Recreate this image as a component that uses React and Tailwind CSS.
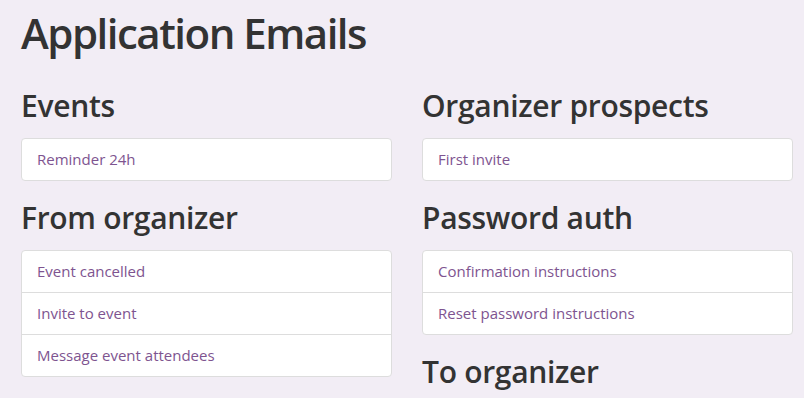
import React from 'react';

const sections = {
  left: [
    { title: 'Events', items: ['Reminder 24h'] },
    { title: 'From organizer', items: ['Event cancelled', 'Invite to event', 'Message event attendees'] },
  ],
  right: [
    { title: 'Organizer prospects', items: ['First invite'] },
    { title: 'Password auth', items: ['Confirmation instructions', 'Reset password instructions'] },
    { title: 'To organizer', items: ['New event'] },
  ],
};

function Section({ title, items }) {
  return (
    <div className="mb-[19px]">
      <h2 className="font-['Open_Sans',sans-serif] text-[30px] font-semibold leading-[36px] tracking-[-0.3px] text-[#333333] mb-[14px]">{title}</h2>
      <div className="rounded-[4px] border border-[#dddddd] bg-white divide-y divide-[#dddddd]">
        {items.map((item) => (
          <a key={item} href="#" className="block px-[15px] py-[10px] text-[15px] leading-[21px] text-[#7e5490]">
            {item}
          </a>
        ))}
      </div>
    </div>
  );
}

export default function App() {
  return (
    <div className="h-screen bg-[#f2edf5] pl-[21px] pr-[11px] pt-[8px] font-['Open_Sans',sans-serif] overflow-hidden">
      <h1 className="font-['Open_Sans',sans-serif] text-[42px] font-semibold leading-[50px] tracking-[-1.5px] text-[#333333] mb-[30px]">Application Emails</h1>
      <div className="grid grid-cols-2 gap-x-[30px]">
        <div>
          {sections.left.map((s) => <Section key={s.title} {...s} />)}
        </div>
        <div>
          {sections.right.map((s) => <Section key={s.title} {...s} />)}
        </div>
      </div>
    </div>
  );
}
